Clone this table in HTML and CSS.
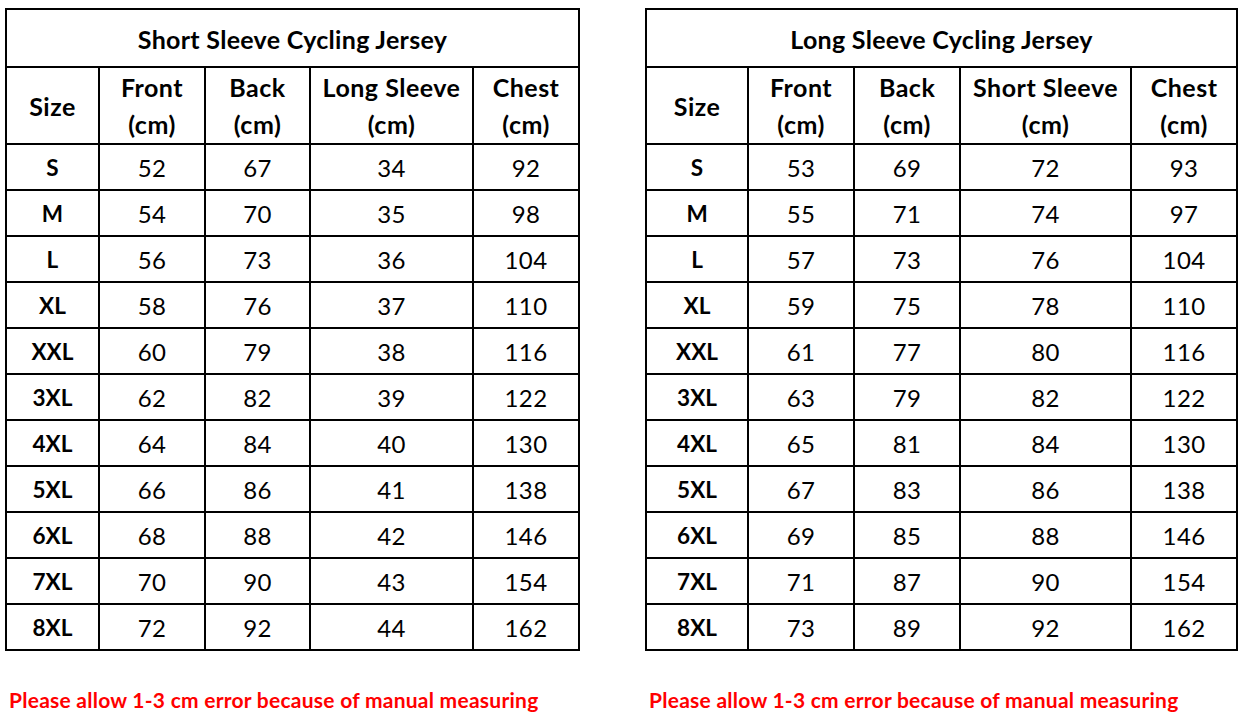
FILE: index.html
```html
<!DOCTYPE html>
<html lang="en">
<head>
<meta charset="utf-8">
<title>Cycling Jersey Size Charts</title>
<link rel="stylesheet" href="styles.css">
</head>
<body>
<div class="page">
  <section class="chart chart-short">
    <table class="sizes">
      <colgroup>
        <col class="c1"><col class="c2"><col class="c3"><col class="c4"><col class="c5">
      </colgroup>
      <tr class="title-row"><th colspan="5">Short Sleeve Cycling Jersey</th></tr>
      <tr class="head-row">
        <th>Size</th><th>Front<br>(cm)</th><th>Back<br>(cm)</th><th>Long Sleeve<br>(cm)</th><th>Chest<br>(cm)</th>
      </tr>
      <tr><th>S</th><td>52</td><td>67</td><td>34</td><td>92</td></tr>
      <tr><th>M</th><td>54</td><td>70</td><td>35</td><td>98</td></tr>
      <tr><th>L</th><td>56</td><td>73</td><td>36</td><td>104</td></tr>
      <tr><th>XL</th><td>58</td><td>76</td><td>37</td><td>110</td></tr>
      <tr><th>XXL</th><td>60</td><td>79</td><td>38</td><td>116</td></tr>
      <tr><th>3XL</th><td>62</td><td>82</td><td>39</td><td>122</td></tr>
      <tr><th>4XL</th><td>64</td><td>84</td><td>40</td><td>130</td></tr>
      <tr><th>5XL</th><td>66</td><td>86</td><td>41</td><td>138</td></tr>
      <tr><th>6XL</th><td>68</td><td>88</td><td>42</td><td>146</td></tr>
      <tr><th>7XL</th><td>70</td><td>90</td><td>43</td><td>154</td></tr>
      <tr><th>8XL</th><td>72</td><td>92</td><td>44</td><td>162</td></tr>
    </table>
    <p class="note">Please allow 1-3 cm error because of manual measuring</p>
  </section>
  <section class="chart chart-long">
    <table class="sizes">
      <colgroup>
        <col class="c1"><col class="c2"><col class="c3"><col class="c4"><col class="c5">
      </colgroup>
      <tr class="title-row"><th colspan="5">Long Sleeve Cycling Jersey</th></tr>
      <tr class="head-row">
        <th>Size</th><th>Front<br>(cm)</th><th>Back<br>(cm)</th><th>Short Sleeve<br>(cm)</th><th>Chest<br>(cm)</th>
      </tr>
      <tr><th>S</th><td>53</td><td>69</td><td>72</td><td>93</td></tr>
      <tr><th>M</th><td>55</td><td>71</td><td>74</td><td>97</td></tr>
      <tr><th>L</th><td>57</td><td>73</td><td>76</td><td>104</td></tr>
      <tr><th>XL</th><td>59</td><td>75</td><td>78</td><td>110</td></tr>
      <tr><th>XXL</th><td>61</td><td>77</td><td>80</td><td>116</td></tr>
      <tr><th>3XL</th><td>63</td><td>79</td><td>82</td><td>122</td></tr>
      <tr><th>4XL</th><td>65</td><td>81</td><td>84</td><td>130</td></tr>
      <tr><th>5XL</th><td>67</td><td>83</td><td>86</td><td>138</td></tr>
      <tr><th>6XL</th><td>69</td><td>85</td><td>88</td><td>146</td></tr>
      <tr><th>7XL</th><td>71</td><td>87</td><td>90</td><td>154</td></tr>
      <tr><th>8XL</th><td>73</td><td>89</td><td>92</td><td>162</td></tr>
    </table>
    <p class="note">Please allow 1-3 cm error because of manual measuring</p>
  </section>
</div>
</body>
</html>
```

FILE: styles.css
```css
* { box-sizing: border-box; }

html, body {
  margin: 0;
  padding: 0;
  background: #ffffff;
}

body {
  font-family: Lato, "Open Sans", "Liberation Sans", sans-serif;
  color: #000000;
}

.page {
  display: flex;
  align-items: flex-start;
  gap: 65px;
  padding: 8px 0 0 5px;
}

.chart {
  display: flex;
  flex-direction: column;
}

.sizes {
  border-collapse: separate;
  border-spacing: 0;
  table-layout: fixed;
  border-left: 2px solid #000;
  border-top: 2px solid #000;
}

.chart-short .sizes { width: 575px; }
.chart-long .sizes { width: 593px; }

.chart-short .c1 { width: 93px; }
.chart-short .c2 { width: 106px; }
.chart-short .c3 { width: 105px; }
.chart-short .c4 { width: 163px; }
.chart-short .c5 { width: 106px; }

.chart-long .c1 { width: 102px; }
.chart-long .c2 { width: 106px; }
.chart-long .c3 { width: 106px; }
.chart-long .c4 { width: 171px; }
.chart-long .c5 { width: 106px; }

.sizes th,
.sizes td {
  border-right: 2px solid #000;
  border-bottom: 2px solid #000;
  padding: 0;
  text-align: center;
  vertical-align: middle;
  height: 46px;
  line-height: 28px;
}

.sizes th {
  font-weight: 700;
  font-size: 22.5px;
  letter-spacing: 0.1px;
  padding-top: 2px;
}

.sizes td {
  font-weight: 400;
  font-size: 24px;
  letter-spacing: 0.4px;
  padding-top: 2px;
}

.sizes .title-row th {
  height: 58px;
  padding-top: 2px;
  font-size: 25px;
  letter-spacing: 0.3px;
}

.sizes .head-row th {
  height: 77px;
  line-height: 37px;
  padding-top: 1px;
  font-size: 25px;
  letter-spacing: 0.5px;
}

.note {
  margin: 36px 0 0;
  padding-left: 4px;
  color: #ff0000;
  font-weight: 700;
  font-size: 21px;
  letter-spacing: 0.25px;
  line-height: 26px;
}
```
